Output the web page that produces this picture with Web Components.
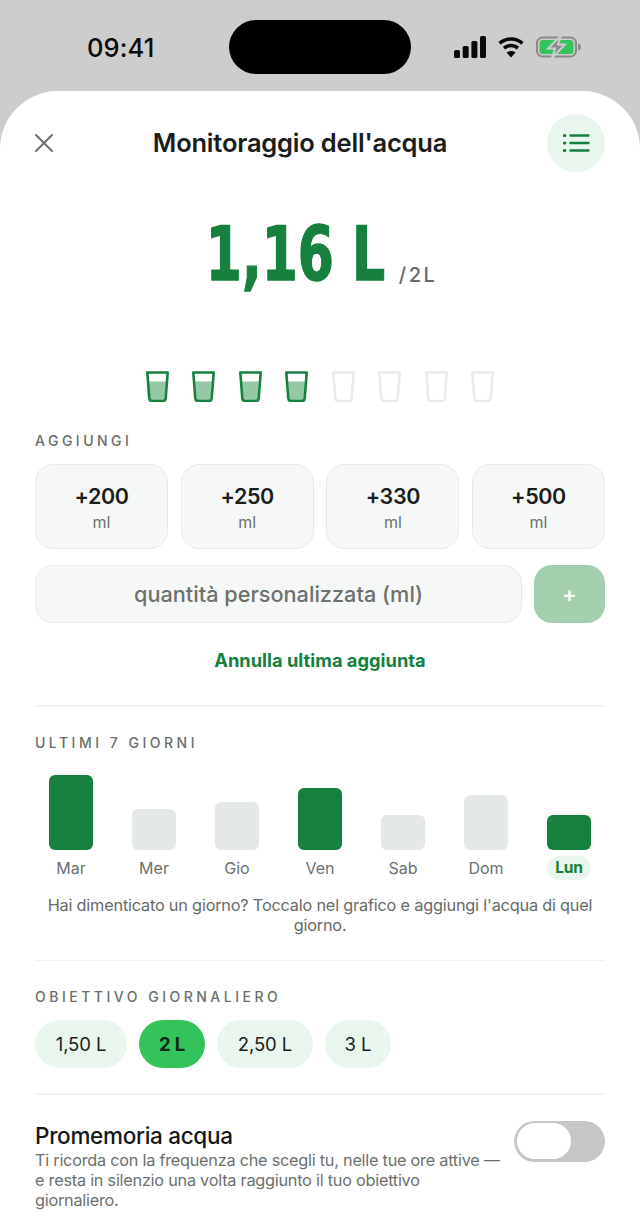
<!DOCTYPE html>
<html lang="it">
<head>
<meta charset="utf-8">
<title>Monitoraggio dell'acqua</title>
<style>
html,body{margin:0;padding:0;background:#cdcdcd;}
body{width:640px;height:1228px;overflow:hidden;font-family:Inter,"Noto Sans",sans-serif;color:#1a1d1c;}
</style>
</head>
<body>
<status-bar></status-bar>
<water-sheet>
  <sheet-header></sheet-header>
  <water-total></water-total>
  <glass-row filled="4" total="8"></glass-row>
  <section-label style="margin-top:30px">AGGIUNGI</section-label>
  <quick-add></quick-add>
  <custom-add></custom-add>
  <undo-link>Annulla ultima aggiunta</undo-link>
  <h-divider style="margin-top:32px"></h-divider>
  <section-label style="margin-top:27px">ULTIMI 7 GIORNI</section-label>
  <week-chart></week-chart>
  <hint-text>Hai dimenticato un giorno? Toccalo nel grafico e aggiungi l'acqua di quel giorno.</hint-text>
  <h-divider style="margin-top:25px"></h-divider>
  <section-label style="margin-top:27px">OBIETTIVO GIORNALIERO</section-label>
  <goal-pills></goal-pills>
  <h-divider style="margin-top:25px"></h-divider>
  <reminder-row></reminder-row>
</water-sheet>
<script>
function comp(name, css, html){
  customElements.define(name, class extends HTMLElement{
    constructor(){super();this.attachShadow({mode:'open'});}
    connectedCallback(){
      const body = typeof html==='function'?html(this):html;
      this.shadowRoot.innerHTML='<style>'+css+'</style>'+body;
    }
  });
}
comp('status-bar',`
:host{display:flex;height:91px;box-sizing:border-box;position:relative;align-items:flex-start;padding-top:20px;justify-content:center;}
.time{position:absolute;left:87px;top:32px;font:500 25.500px/32px Inter,sans-serif;color:#0a0a0a;letter-spacing:.1px;}
.island{width:182px;height:54px;border-radius:27px;background:#000;}
.icons{position:absolute;left:454px;top:36px;display:flex;align-items:center;gap:12px;}
svg{display:block}
`,`
<span class="time">09:41</span>
<div class="island"></div>
<div class="icons">
<svg width="32" height="22" viewBox="0 0 32 22"><rect x="0" y="14" width="6" height="8" rx="1.6" fill="#0a0a0a"/><rect x="8.7" y="10" width="6" height="12" rx="1.6" fill="#0a0a0a"/><rect x="17.4" y="5" width="6" height="17" rx="1.6" fill="#0a0a0a"/><rect x="26" y="0" width="6" height="22" rx="1.6" fill="#0a0a0a"/></svg>
<svg width="26" height="22" viewBox="0 0 26 22" fill="none" stroke="#0a0a0a" stroke-width="3.6"><path d="M1.6 7.4C8 1.5 18 1.5 24.4 7.4"/><path d="M6 12.2c4-3.6 10-3.6 14 0"/><path d="M13 21.4l-4.5-4.8c2.5-2 6.5-2 9 0z" fill="#0a0a0a" stroke="none"/></svg>
<svg width="45" height="22" viewBox="0 0 45 22"><rect x="1" y="1.500" width="39" height="19" rx="5.500" fill="none" stroke="#8a8a8a" stroke-width="2"/><rect x="3.500" y="4" width="34" height="14" rx="3.500" fill="#34c25a"/><path d="M42 7.500c2 .5 3 2 3 3.500s-1 3-3 3.500z" fill="#8a8a8a"/><path d="M25 -.5 12 12.500h7l-3 9.500 13-13.500h-7z" fill="#8b8b8b" stroke="#cdcdcd" stroke-width="2"/></svg>
</div>`);

comp('water-sheet',`
:host{display:flex;flex-direction:column;background:#fff;border-radius:58px 58px 0 0;height:1137px;box-sizing:border-box;padding:23px 35px 0;}
`,`<slot></slot>`);

comp('sheet-header',`
:host{display:flex;align-items:center;justify-content:space-between;height:58px;}
.x{display:block;width:18px;height:18px;}
h1{margin:0;font:600 25.500px/32px Inter,sans-serif;letter-spacing:-.2px;color:#1a1d1c;}
.m{width:58px;height:58px;border-radius:50%;background:#e9f6ee;display:flex;align-items:center;justify-content:center;}
`,`
<svg class="x" viewBox="0 0 18 18" fill="none" stroke="#666b68" stroke-width="1.800" stroke-linecap="round"><path d="M1 1l16 16M17 1L1 17"/></svg>
<h1>Monitoraggio dell'acqua</h1>
<div class="m"><svg width="27" height="20" viewBox="0 0 27 20" fill="none" stroke="#16803f" stroke-width="2.400" stroke-linecap="round"><path d="M7.500 2.500h18M7.500 10h18M7.500 17.500h18"/><path d="M1.500 2.500h.3M1.500 10h.3M1.500 17.500h.3" stroke-width="3.200"/></svg></div>`);

comp('water-total',`
:host{display:flex;justify-content:center;align-items:baseline;height:199px;box-sizing:border-box;padding-top:37px;padding-left:3.600px;}
.n{display:inline-block;font:700 75px/90px "DejaVu Sans Condensed","DejaVu Sans",sans-serif;color:#16803f;transform:scaleX(.77);white-space:nowrap;margin:0 -26.700px;-webkit-text-stroke:1.400px #16803f;}
.g{font:500 20px/24px Inter,sans-serif;color:#66696a;letter-spacing:2.600px;margin-left:13px;transform:translateY(1.500px);}
`,`<span class="n">1,16 L</span><span class="g">/2L</span>`);

comp('glass-row',`
:host{display:flex;justify-content:center;gap:23.500px;height:31px;}
svg{display:block;}
`,(el)=>{
  const f=+el.getAttribute('filled'),t=+el.getAttribute('total');let s='';
  const cup='M1.300 1.500h20.400l-2 25.700a3 3 0 0 1-3 2.800h-10.400a3 3 0 0 1-3-2.800z';
  for(let i=0;i<t;i++){
    s+= i<f
    ?'<svg width="23" height="31" viewBox="0 0 23 31"><path d="M3 10.500h17l-1.400 17.500a2 2 0 0 1-2 1.500h-10.200a2 2 0 0 1-2-1.500z" fill="#96c8a6"/><path d="'+cup+'" fill="none" stroke="#16803f" stroke-width="2.600" stroke-linejoin="round"/></svg>'
    :'<svg width="23" height="31" viewBox="0 0 23 31"><path d="'+cup+'" fill="none" stroke="#e9ebea" stroke-width="2.600" stroke-linejoin="round"/></svg>';
  }
  return s;
});

comp('section-label',`
:host{display:block;font:500 14px/18px Inter,sans-serif;letter-spacing:3.500px;color:#68706c;}
`,`<slot></slot>`);

comp('quick-add',`
:host{display:grid;grid-template-columns:repeat(4,1fr);gap:12.670px;margin-top:14px;}
.c{height:85px;box-sizing:border-box;border:1.500px solid #e7eae8;border-radius:18px;background:#f6f8f7;display:flex;flex-direction:column;align-items:center;}
b{font:600 21.500px/28px Inter,sans-serif;letter-spacing:-.4px;color:#1a1d1c;margin-top:17px;}
span{font:400 16px/20px Inter,sans-serif;color:#6c716e;margin-top:2px;}
`,['+200','+250','+330','+500'].map(v=>`<div class="c"><b>${v}</b><span>ml</span></div>`).join(''));

comp('custom-add',`
:host{display:flex;gap:12px;margin-top:16px;height:58px;}
.i{flex:1;box-sizing:border-box;border:1.500px solid #e7eae8;border-radius:18px;background:#f6f8f7;display:flex;align-items:center;justify-content:center;font:500 21.700px/28px Inter,sans-serif;color:#6c716e;}
.b{width:71px;border-radius:18px;background:#a3cfae;display:flex;align-items:center;justify-content:center;font:600 22px/28px Inter,sans-serif;color:#f3f9f5;}
`,`<div class="i">quantità personalizzata (ml)</div><div class="b">+</div>`);

comp('undo-link',`
:host{display:block;text-align:center;margin-top:24px;font:700 18.300px/26px Inter,sans-serif;color:#16803f;}
`,`<slot></slot>`);

comp('h-divider',`
:host{display:block;height:1.500px;background:#f0f2f1;flex:none;}
`,``);

comp('week-chart',`
:host{display:grid;grid-template-columns:repeat(7,1fr);gap:11px;margin-top:23px;}
.d{display:flex;flex-direction:column;align-items:center;}
.t{height:75px;display:flex;align-items:flex-end;}
.b{width:44px;border-radius:6px;background:#e4e8e6;}
.b.on{background:#16803f;}
.l{margin-top:6px;height:24px;padding:0 8px;min-width:44px;box-sizing:border-box;text-align:center;font:400 16px/24px Inter,sans-serif;color:#6c716e;white-space:nowrap;}
.l.now{background:#e9f6ee;border-radius:12px;color:#16803f;font-weight:700;font-size:15.500px;letter-spacing:-.2px;padding:0;}
`,[['Mar',75,1],['Mer',41,0],['Gio',48,0],['Ven',62,1],['Sab',35,0],['Dom',55,0],['Lun',35,1,1]].map(d=>`<div class="d"><div class="t"><div class="b${d[2]?' on':''}" style="height:${d[1]}px"></div></div><div class="l${d[3]?' now':''}">${d[0]}</div></div>`).join(''));

comp('hint-text',`
:host{display:block;text-align:center;margin:15px 0 0;font:400 16.300px/20px Inter,sans-serif;letter-spacing:-.2px;color:#666b68;}
`,`<slot></slot>`);

comp('goal-pills',`
:host{display:flex;gap:12px;margin-top:14px;}
.p{height:48px;border-radius:24px;background:#e9f6ee;display:flex;align-items:center;justify-content:center;font:400 18.500px/24px Inter,sans-serif;color:#1a1d1c;letter-spacing:-.1px;box-sizing:border-box;}
.p.on{background:#34c25a;font-weight:700;color:#0e2a18;}
`,[['1,50 L',92],['2 L',66,1],['2,50 L',96],['3 L',66]].map(p=>`<div class="p${p[2]?' on':''}" style="width:${p[1]}px">${p[0]}</div>`).join(''));

comp('reminder-row',`
:host{display:flex;justify-content:space-between;align-items:flex-start;margin-top:26px;}
.t{width:472px;}
h2{margin:0;font:500 22.500px/29px Inter,sans-serif;letter-spacing:-.3px;color:#141716;}
p{margin:0;font:400 16.300px/20px Inter,sans-serif;letter-spacing:-.25px;color:#6c716e;}
.s{width:91px;height:41px;border-radius:21px;background:#c6c6c6;box-sizing:border-box;padding:2.500px;flex:none;}
.k{width:54px;height:36px;border-radius:18px;background:#fff;}
`,`<div class="t"><h2>Promemoria acqua</h2><p>Ti ricorda con la frequenza che scegli tu, nelle tue ore attive — e resta in silenzio una volta raggiunto il tuo obiettivo giornaliero.</p></div><div class="s"><div class="k"></div></div>`);
</script>
</body>
</html>
